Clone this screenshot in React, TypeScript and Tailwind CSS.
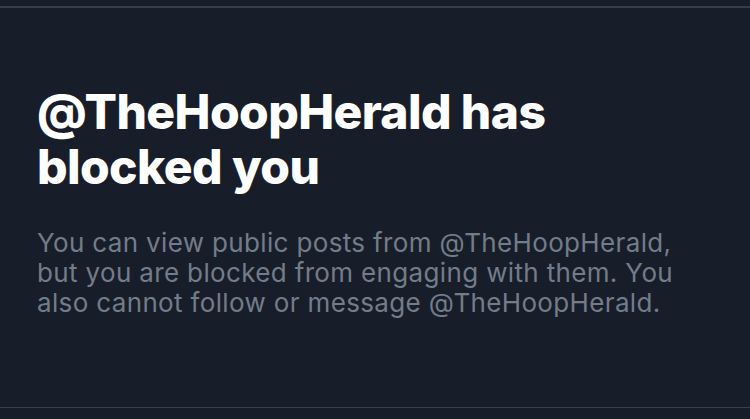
export default function App() {
  return (
    <div className="w-[750px] h-[419px] bg-[#181e29] flex flex-col font-['Inter',sans-serif]">
      <div className="h-[6px]" />
      <div className="h-[2px] bg-[#373d47]" />
      <div className="flex-1 flex flex-col px-[37px] pt-[76px]">
        <h1 className="text-[48px] leading-[55px] font-extrabold tracking-[-0.6px] text-white">
          @TheHoopHerald has
          <br />
          blocked you
        </h1>
        <p className="mt-[34px] text-[26px] leading-[30px] tracking-[0.35px] text-[#737c89]">
          You can view public posts from @TheHoopHerald,
          <br />
          but you are blocked from engaging with them. You
          <br />
          also cannot follow or message @TheHoopHerald.
        </p>
      </div>
      <div className="h-[1px] bg-[#3a404a]" />
      <div className="h-[11px]" />
    </div>
  );
}
